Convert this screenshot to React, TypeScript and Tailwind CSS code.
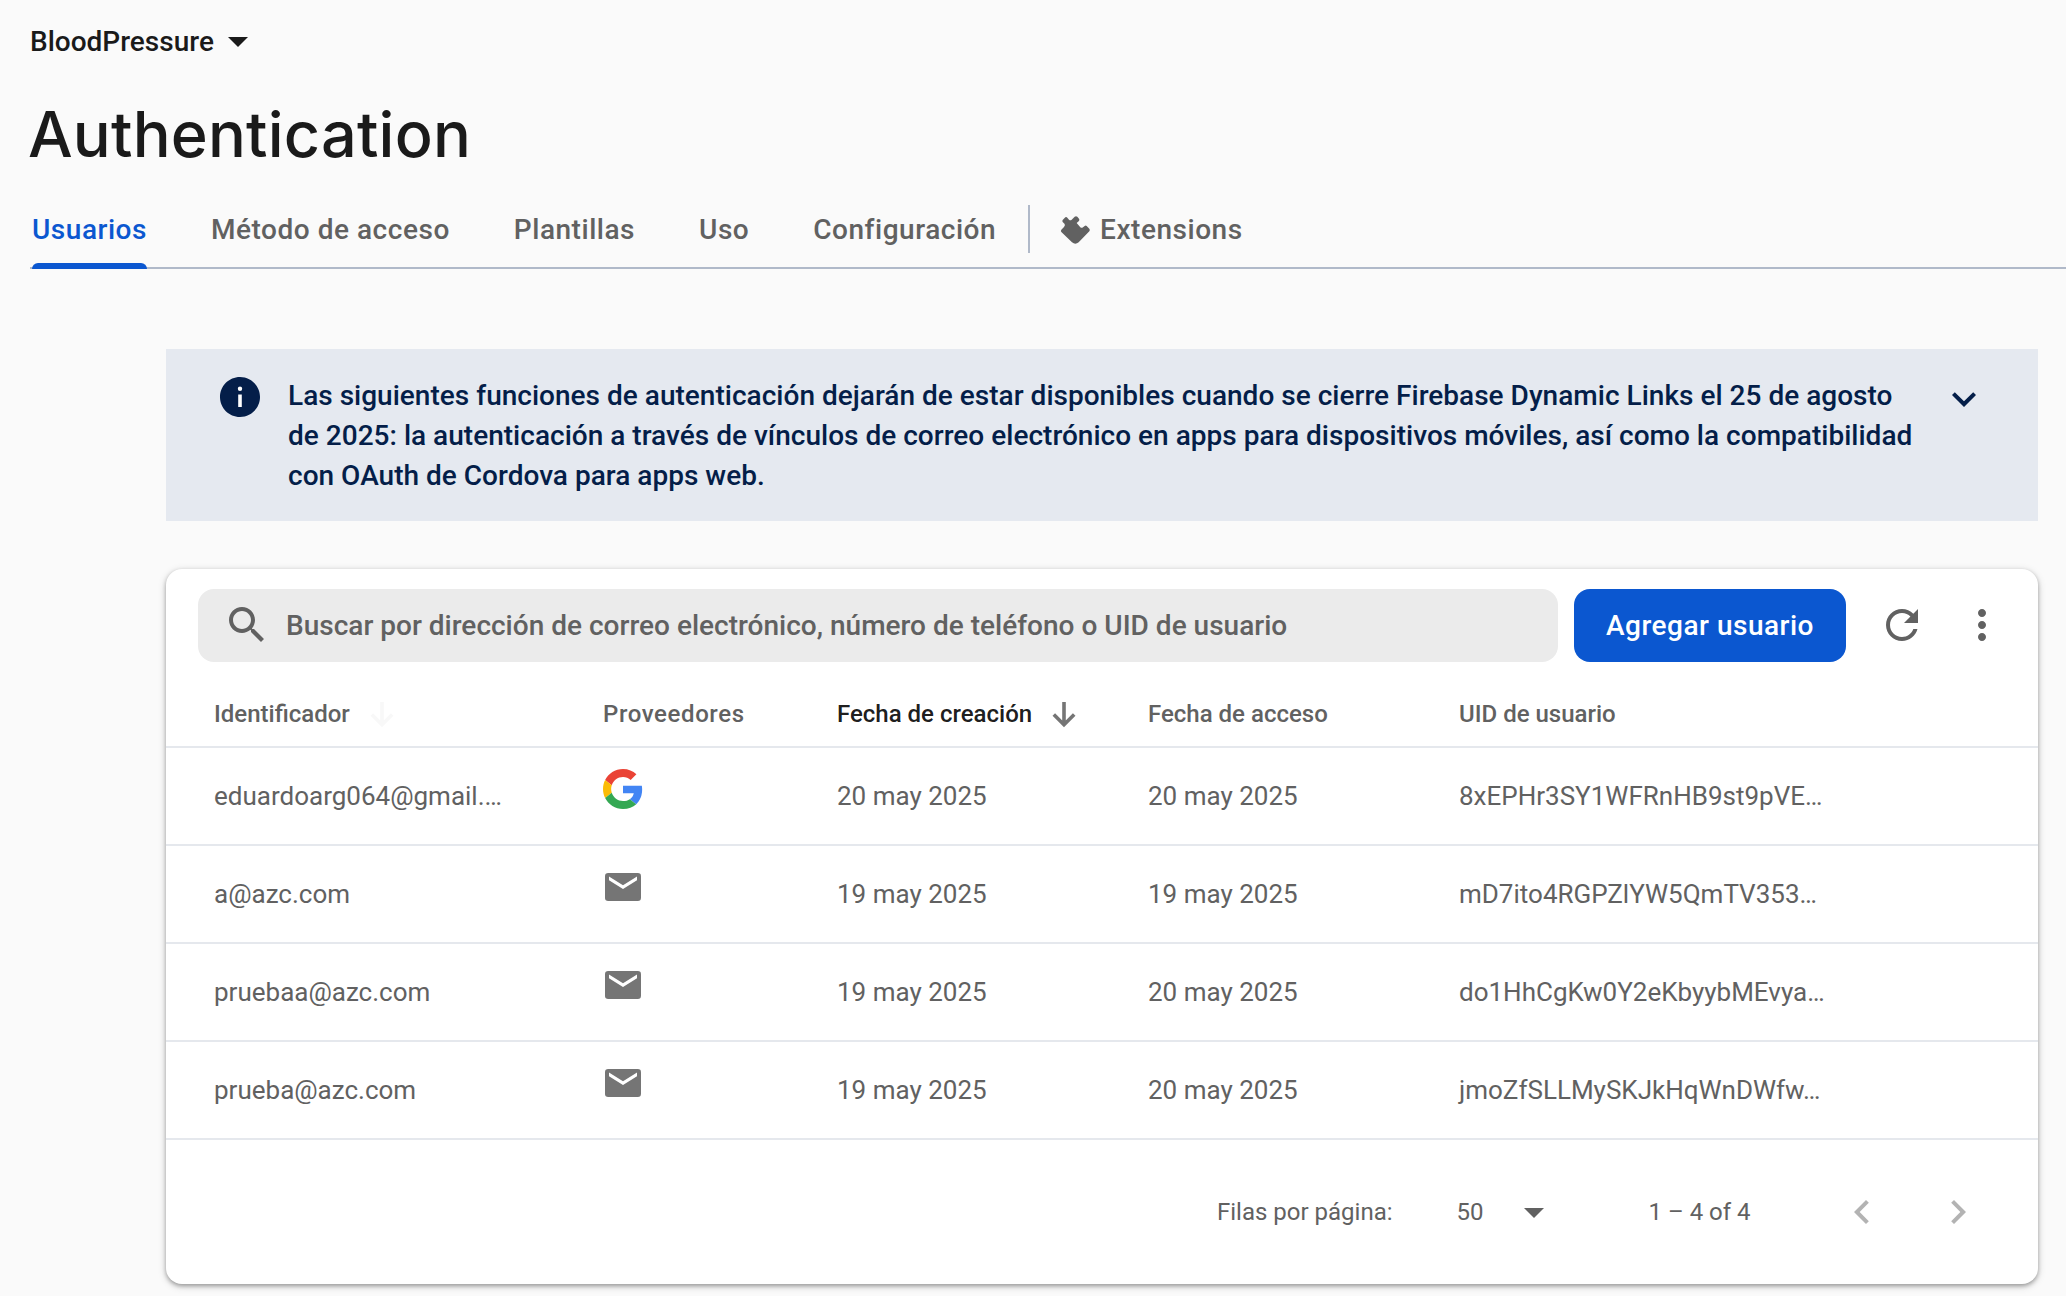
import type { ReactNode } from "react";

type IconProps = { d: string; className?: string };

function Icon({ d, className = "" }: IconProps) {
  return (
    <svg viewBox="0 0 24 24" className={`size-12 shrink-0 fill-current ${className}`} aria-hidden="true">
      <path d={d} />
    </svg>
  );
}

const paths = {
  dropDown: "M7 10l5 5 5-5z",
  info: "M12 2C6.48 2 2 6.48 2 12s4.48 10 10 10 10-4.48 10-10S17.52 2 12 2zm.9 15h-1.8v-6.2h1.8V17zm-.9-8a1.1 1.1 0 1 1 0-2.2 1.1 1.1 0 0 1 0 2.2z",
  expandMore: "M16.59 8.59L12 13.17 7.41 8.59 6 10l6 6 6-6z",
  search:
    "M15.5 14h-.79l-.28-.27C15.41 12.59 16 11.11 16 9.5 16 5.91 13.09 3 9.5 3S3 5.91 3 9.5 5.91 16 9.5 16c1.61 0 3.09-.59 4.23-1.57l.27.28v.79l5 4.99L20.49 19l-4.99-5zm-6 0C7.01 14 5 11.99 5 9.5S7.01 5 9.5 5 14 7.01 14 9.5 11.99 14 9.5 14z",
  refresh:
    "M17.65 6.35C16.2 4.9 14.21 4 12 4c-4.42 0-7.99 3.58-7.99 8s3.57 8 7.99 8c3.73 0 6.84-2.55 7.73-6h-2.08c-.82 2.33-3.04 4-5.65 4-3.31 0-6-2.69-6-6s2.69-6 6-6c1.66 0 3.14.69 4.22 1.78L13 11h7V4l-2.35 2.35z",
  more: "M12 8c1.1 0 2-.9 2-2s-.9-2-2-2-2 .9-2 2 .9 2 2 2zm0 2c-1.1 0-2 .9-2 2s.9 2 2 2 2-.9 2-2-.9-2-2-2zm0 6c-1.1 0-2 .9-2 2s.9 2 2 2 2-.9 2-2-.9-2-2-2z",
  left: "M15.41 7.41L14 6l-6 6 6 6 1.41-1.41L10.83 12z",
  right: "M10 6L8.59 7.41 13.17 12l-4.58 4.59L10 18l6-6z",
};

function ExtensionIcon() {
  return (
    <svg viewBox="30 27 93 90" className="h-[30px] w-[31px] fill-current" aria-hidden="true">
      <path d="M46 34Q49 32 52 35L57 41Q61 45 65 41L74 32Q78 29 82 32L87 38Q90 42 86 46L80 51L91 64Q95 67 99 64L104 60Q107 57 110 60L118 68Q121 72 118 76L86 109Q76 117 66 109L34 78Q31 75 34 71L42 63Q46 59 44 54L38 48Q36 45 38 42Z" />
    </svg>
  );
}

function SortArrow({ className = "" }: { className?: string }) {
  return (
    <svg viewBox="0 0 24 26" className={`mt-0.5 h-[26px] w-6 fill-none stroke-current ${className}`} strokeWidth="3.6" aria-hidden="true">
      <path d="M12 0V22M1.8 12.6L12 22.8L22.2 12.6" />
    </svg>
  );
}

function GoogleIcon() {
  return (
    <svg viewBox="0 0 48 48" className="mt-[21px] size-10" aria-label="Google">
      <path fill="#EA4335" d="M24 9.5c3.54 0 6.71 1.22 9.21 3.6l6.85-6.85C35.9 2.38 30.47 0 24 0 14.62 0 6.51 5.38 2.56 13.22l7.98 6.19C12.43 13.72 17.74 9.5 24 9.5z" />
      <path fill="#4285F4" d="M46.98 24.55c0-1.57-.15-3.09-.38-4.55H24v9.02h12.94c-.58 2.96-2.26 5.48-4.78 7.18l7.73 6c4.51-4.18 7.09-10.36 7.09-17.65z" />
      <path fill="#FBBC05" d="M10.53 28.59c-.48-1.45-.76-2.99-.76-4.59s.27-3.14.76-4.59l-7.98-6.19C.92 16.46 0 20.12 0 24c0 3.88.92 7.54 2.56 10.78l7.97-6.19z" />
      <path fill="#34A853" d="M24 48c6.48 0 11.93-2.13 15.89-5.81l-7.73-6c-2.15 1.45-4.92 2.3-8.16 2.3-6.26 0-11.57-4.22-13.47-9.91l-7.98 6.19C6.51 42.62 14.62 48 24 48z" />
    </svg>
  );
}

function MailIcon() {
  return (
    <svg viewBox="0 0 36 28" className="mt-[27px] ml-0.5 h-7 w-9" aria-label="Email">
      <rect width="36" height="28" rx="3.2" fill="#757575" />
      <path fill="#fff" d="M4 3.6L18 12.3L32 3.6V7.2L18 16L4 7.2Z" />
    </svg>
  );
}

function Tab({ label, active = false }: { label: string; active?: boolean }) {
  return (
    <a className={`relative flex h-full items-center pt-[7px] ${active ? "text-[#0b57d0]" : ""}`}>
      {label}
      {active && <span className="absolute inset-x-0 -bottom-0.5 h-1.5 rounded-t-md bg-[#0b57d0]" />}
    </a>
  );
}

const columns = "grid grid-cols-[389px_234px_311px_311px_1fr] pl-12 border-b-2 border-[#e5e8ed]";

const users: { id: string; provider: ReactNode; created: string; seen: string; uid: string }[] = [
  { id: "eduardoarg064@gmail.…", provider: <GoogleIcon />, created: "20 may 2025", seen: "20 may 2025", uid: "8xEPHr3SY1WFRnHB9st9pVE…" },
  { id: "a@azc.com", provider: <MailIcon />, created: "19 may 2025", seen: "19 may 2025", uid: "mD7ito4RGPZlYW5QmTV353…" },
  { id: "pruebaa@azc.com", provider: <MailIcon />, created: "19 may 2025", seen: "20 may 2025", uid: "do1HhCgKw0Y2eKbyybMEvya…" },
  { id: "prueba@azc.com", provider: <MailIcon />, created: "19 may 2025", seen: "20 may 2025", uid: "jmoZfSLLMySKJkHqWnDWfw…" },
];

export default function App() {
  return (
    <div className="h-[1296px] w-full overflow-hidden bg-[#fafafa] font-[Roboto,sans-serif] text-[28px] text-[#616161]">
      <header className="pl-[30px] text-[#1a1a1a]">
        <div className="flex h-[83px] items-center font-medium">
          BloodPressure
          <Icon d={paths.dropDown} className="mb-px" />
        </div>
        <h1 className="-ml-0.5 flex h-[102px] items-center font-[Inter,sans-serif] text-[63px] font-medium tracking-[0.2px]">
          Authentication
        </h1>
      </header>

      <nav className="ml-[30px] flex h-[84px] items-center border-b-2 border-[#b0b9c9] pl-0.5 font-medium tracking-[0.53px]">
        <div className="flex h-full gap-16">
          <Tab label="Usuarios" active />
          <Tab label="Método de acceso" />
          <Tab label="Plantillas" />
          <Tab label="Uso" />
          <Tab label="Configuración" />
        </div>
        <div className="mt-[5px] ml-8 h-12 w-0.5 bg-[#b0b9c9]" />
        <a className="mt-[7px] ml-[30px] flex items-center gap-[9px]">
          <ExtensionIcon />
          Extensions
        </a>
      </nav>

      <main className="mr-7 ml-[166px] pt-20">
        <section className="flex h-[172px] items-start bg-[#e5e9f0] pl-[50px] text-[#041e49]">
          <div className="relative mt-6 size-12">
            <span className="absolute inset-3.5 bg-white" />
            <Icon d={paths.info} className="relative" />
          </div>
          <p className="mt-[27px] ml-6 w-[1636px] leading-10 font-medium tracking-[0.016px]">
            Las siguientes funciones de autenticación dejarán de estar disponibles cuando se cierre Firebase Dynamic Links el 25 de agosto de 2025: la autenticación a través de vínculos de correo electrónico en apps para dispositivos móviles, así como la compatibilidad con OAuth de Cordova para apps web.
          </p>
          <Icon d={paths.expandMore} className="mt-[26px] ml-4" />
        </section>

        <section className="mt-12 h-[715px] rounded-2xl bg-white pt-5 shadow-[0_2px_4px_rgba(0,0,0,0.3),0_2px_8px_rgba(0,0,0,0.16)]">
          <div className="flex h-[73px] items-center pl-8">
            <div className="flex h-full w-[1360px] items-center rounded-2xl bg-[#ebebeb] pl-[25px] font-medium">
              <Icon d={paths.search} className="mb-px" />
              <span className="ml-[15px] tracking-[0.008px]">Buscar por dirección de correo electrónico, número de teléfono o UID de usuario</span>
            </div>
            <button className="ml-4 h-full w-[272px] rounded-2xl bg-[#0b57d0] font-medium tracking-[0.5px] text-white">
              Agregar usuario
            </button>
            <Icon d={paths.refresh} className="mb-px ml-8" />
            <Icon d={paths.more} className="mb-px ml-8" />
          </div>

          <div className={`${columns} h-[86px] pt-[19px] text-2xl font-medium`}>
            <div className="flex items-center">
              Identificador
              <SortArrow className="ml-5 text-[#f8f8f8]" />
            </div>
            <div className="flex items-center tracking-[0.6px]">Proveedores</div>
            <div className="flex items-center text-black/90">
              Fecha de creación
              <SortArrow className="ml-5 text-[#757575]" />
            </div>
            <div className="flex items-center">Fecha de acceso</div>
            <div className="flex items-center">UID de usuario</div>
          </div>

          {users.map((u) => (
            <div key={u.id} className={`${columns} h-[98px] text-[26px]`}>
              <div className="flex items-center">{u.id}</div>
              <div className="flex items-start">{u.provider}</div>
              <div className="flex items-center">{u.created}</div>
              <div className="flex items-center">{u.seen}</div>
              <div className="flex items-center">{u.uid}</div>
            </div>
          ))}

          <footer className="flex h-36 items-center pl-[1051px] text-2xl">
            Filas por página:
            <span className="ml-16">50</span>
            <Icon d={paths.dropDown} className="ml-[26px]" />
            <span className="ml-[91px]">1 – 4 of 4</span>
            <Icon d={paths.left} className="ml-[87px] text-[#b3b3b3]" />
            <Icon d={paths.right} className="ml-12 text-[#b3b3b3]" />
          </footer>
        </section>
      </main>
    </div>
  );
}
